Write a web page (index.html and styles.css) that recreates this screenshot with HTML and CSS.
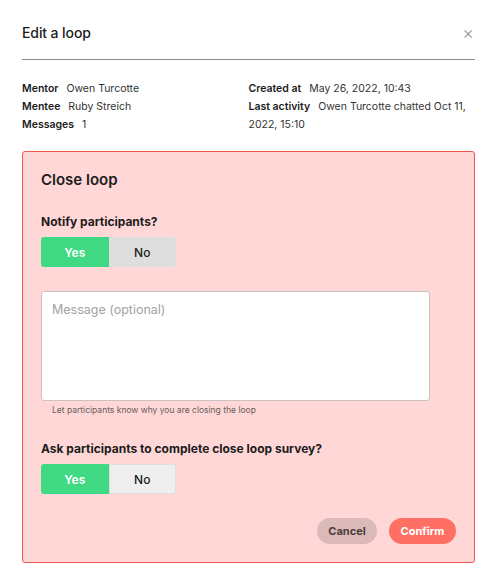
FILE: index.html
```html
<!DOCTYPE html>
<html>
<head>
    <title>Edit a loop</title>
    <link rel="stylesheet" href="styles.css">
</head>
<body>
    <div class="modal">
        <div class="modal-header">
            <h1>Edit a loop</h1>
            <span class="close">&times;</span>
        </div>

        <div class="info">
            <div class="info-col">
                <div><b>Mentor</b> Owen Turcotte</div>
                <div><b>Mentee</b> Ruby Streich</div>
                <div><b>Messages</b> 1</div>
            </div>
            <div class="info-col">
                <div><b>Created at</b> May 26, 2022, 10:43</div>
                <div><b>Last activity</b> Owen Turcotte chatted Oct 11, 2022, 15:10</div>
            </div>
        </div>

        <div class="close-box">
            <h2>Close loop</h2>

            <label class="question">Notify participants?</label>
            <div class="toggle">
                <button type="button" class="on">Yes</button>
                <button type="button" class="off">No</button>
            </div>

            <textarea class="message" placeholder="Message (optional)"></textarea>
            <p class="hint">Let participants know why you are closing the loop</p>

            <label class="question second">Ask participants to complete close loop survey?</label>
            <div class="toggle light">
                <button type="button" class="on">Yes</button>
                <button type="button" class="off">No</button>
            </div>

            <div class="actions">
                <button type="button" class="cancel">Cancel</button>
                <button type="button" class="confirm">Confirm</button>
            </div>
        </div>
    </div>
</body>
</html>
```

FILE: styles.css
```css
body {
    margin: 0;
    background-color: #ffffff;
    font-family: Inter, "Noto Sans", sans-serif;
    color: #1c1c1c;
}

.modal {
    padding: 24px 23px 0 22px;
}

.modal-header {
    display: flex;
    justify-content: space-between;
    align-items: center;
    padding-bottom: 17px;
    border-bottom: 1px solid #8a8a8a;
}

h1 {
    margin: 0;
    font-size: 14px;
    font-weight: 500;
    line-height: 18px;
    letter-spacing: -0.1px;
}

.close {
    color: #9a9a9a;
    font-size: 18px;
    font-weight: 300;
    line-height: 18px;
    margin-right: 1px;
}

.info {
    display: flex;
    margin-top: 20px;
    font-size: 10.5px;
    line-height: 18px;
    color: #333333;
}

.info-col {
    width: 227px;
}

.info-col b {
    font-weight: 600;
    color: #1c1c1c;
    margin-right: 5px;
}

.close-box {
    margin-top: 17px;
    background-color: #ffd7d7;
    border: 1px solid #f0554c;
    border-radius: 3px;
    padding: 18px;
}

h2 {
    margin: 0;
    font-size: 15px;
    font-weight: 600;
    line-height: 20px;
}

.question {
    display: block;
    margin-top: 23px;
    font-size: 12px;
    font-weight: 700;
    line-height: 18px;
}

.question.second {
    margin-top: 24px;
}

.toggle {
    display: flex;
    margin-top: 6px;
}

.toggle button {
    width: 67.5px;
    height: 30px;
    border: none;
    font-family: inherit;
    font-size: 12px;
}

.toggle .on {
    background-color: #40d984;
    color: #ffffff;
    font-weight: 600;
    border-radius: 3px 0 0 3px;
}

.toggle .off {
    background-color: #dedede;
    color: #1c1c1c;
    font-weight: 500;
    border-radius: 0 3px 3px 0;
}

.toggle.light .off {
    background-color: #efefef;
    border: 1px solid #e2dcdc;
}

.message {
    display: block;
    box-sizing: border-box;
    width: 389px;
    height: 110px;
    margin-top: 24px;
    padding: 10px;
    border: 1px solid #c9c4c4;
    border-radius: 3px;
    background-color: #ffffff;
    font-family: inherit;
    font-size: 12.5px;
    resize: none;
}

.message::placeholder {
    color: #a3a3a3;
}

.hint {
    margin: 3px 0 0 11px;
    font-size: 8.5px;
    line-height: 12px;
    color: #6a5c5c;
}

.actions {
    display: flex;
    justify-content: flex-end;
    gap: 12px;
    margin-top: 24px;
}

.actions button {
    height: 26px;
    border: none;
    border-radius: 13px;
    font-family: inherit;
    font-size: 11px;
    font-weight: 700;
    cursor: pointer;
}

.cancel {
    width: 60px;
    background-color: #dbb9b8;
    color: #4a3d3d;
}

.confirm {
    width: 67px;
    background-color: #ff6f63;
    color: #ffffff;
}
```
